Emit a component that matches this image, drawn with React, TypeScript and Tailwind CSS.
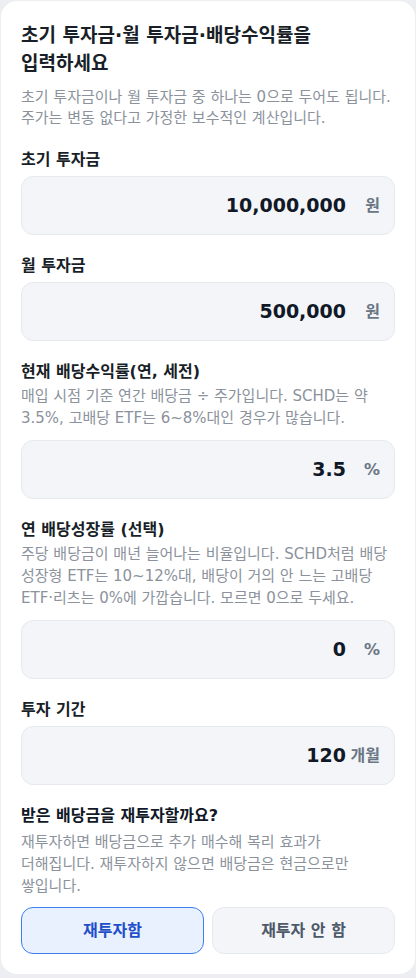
import { useState } from 'react';

interface FieldProps {
  label: string;
  desc?: string[];
  value: string;
  unit: string;
  onChange: (v: string) => void;
}

function Field({ label, desc, value, unit, onChange }: FieldProps) {
  return (
    <div className="flex flex-col">
      <label className="text-[16px] leading-[22px] font-bold text-[#191f28]">{label}</label>
      {desc && (
        <p className="mt-[2px] mb-[6px] text-[15px] leading-[22px] text-[#8b929c] whitespace-nowrap">
          {desc.map((line, i) => (
            <span key={i} className="block">
              {line}
            </span>
          ))}
        </p>
      )}
      <div className="mt-[5px] flex h-[59px] items-center rounded-xl border border-[#e6e9ee] bg-[#f3f5f8] pl-4 pr-[14px]">
        <input
          type="text"
          inputMode="decimal"
          value={value}
          onChange={(e) => onChange(e.target.value)}
          className="min-w-0 flex-1 bg-transparent text-right text-[19px] font-bold text-[#111827] outline-none"
        />
        <span className="ml-[4px] min-w-[30px] text-right text-[16px] font-semibold text-[#6b7684]">{unit}</span>
      </div>
    </div>
  );
}

export default function App() {
  const [initial, setInitial] = useState('10,000,000');
  const [monthly, setMonthly] = useState('500,000');
  const [yieldRate, setYieldRate] = useState('3.5');
  const [growth, setGrowth] = useState('0');
  const [months, setMonths] = useState('120');
  const [reinvest, setReinvest] = useState(true);

  return (
    <div
      className="min-h-screen bg-[#eceef2] px-px pt-px pb-[3px]"
      style={{ fontFamily: '"DejaVu Sans", "Noto Sans CJK KR", sans-serif' }}
    >
      <div className="flex flex-col gap-5 rounded-2xl bg-white p-5">
        {/* Header */}
        <div>
          <h2 className="text-[19px] leading-[28px] font-bold text-[#191f28]">
            초기 투자금·월 투자금·배당수익률을
            <br />
            입력하세요
          </h2>
          <p className="mt-[10px] text-[15px] leading-[21px] text-[#8b929c] whitespace-nowrap">
            <span className="block">초기 투자금이나 월 투자금 중 하나는 0으로 두어도 됩니다.</span>
            <span className="block">주가는 변동 없다고 가정한 보수적인 계산입니다.</span>
          </p>
        </div>

        <Field label="초기 투자금" value={initial} unit="원" onChange={setInitial} />
        <Field label="월 투자금" value={monthly} unit="원" onChange={setMonthly} />
        <Field
          label="현재 배당수익률(연, 세전)"
          desc={[
            '매입 시점 기준 연간 배당금 ÷ 주가입니다. SCHD는 약',
            '3.5%, 고배당 ETF는 6~8%대인 경우가 많습니다.',
          ]}
          value={yieldRate}
          unit="%"
          onChange={setYieldRate}
        />
        <Field
          label="연 배당성장률 (선택)"
          desc={[
            '주당 배당금이 매년 늘어나는 비율입니다. SCHD처럼 배당',
            '성장형 ETF는 10~12%대, 배당이 거의 안 느는 고배당',
            'ETF·리츠는 0%에 가깝습니다. 모르면 0으로 두세요.',
          ]}
          value={growth}
          unit="%"
          onChange={setGrowth}
        />
        <Field label="투자 기간" value={months} unit="개월" onChange={setMonths} />

        {/* Reinvest toggle */}
        <div className="flex flex-col">
          <div className="text-[16px] leading-[22px] font-bold text-[#111827]">받은 배당금을 재투자할까요?</div>
          <p className="mt-1 text-[15px] leading-[22px] text-[#8b929c] whitespace-nowrap">
            <span className="block">재투자하면 배당금으로 추가 매수해 복리 효과가</span>
            <span className="block">더해집니다. 재투자하지 않으면 배당금은 현금으로만</span>
            <span className="block">쌓입니다.</span>
          </p>
          <div className="mt-[10px] grid grid-cols-2 gap-2">
            <button
              onClick={() => setReinvest(true)}
              className={`h-[47px] rounded-xl border text-[16px] font-bold ${
                reinvest
                  ? 'border-[#3b7ff0] bg-[#e9f1fe] text-[#1f4fc8]'
                  : 'border-[#e6e9ee] bg-[#f3f5f8] text-[#4e5968]'
              }`}
            >
              재투자함
            </button>
            <button
              onClick={() => setReinvest(false)}
              className={`h-[47px] rounded-xl border text-[16px] font-bold ${
                !reinvest
                  ? 'border-[#3b7ff0] bg-[#e9f1fe] text-[#1f4fc8]'
                  : 'border-[#e6e9ee] bg-[#f3f5f8] text-[#4e5968]'
              }`}
            >
              재투자 안 함
            </button>
          </div>
        </div>
      </div>
    </div>
  );
}
